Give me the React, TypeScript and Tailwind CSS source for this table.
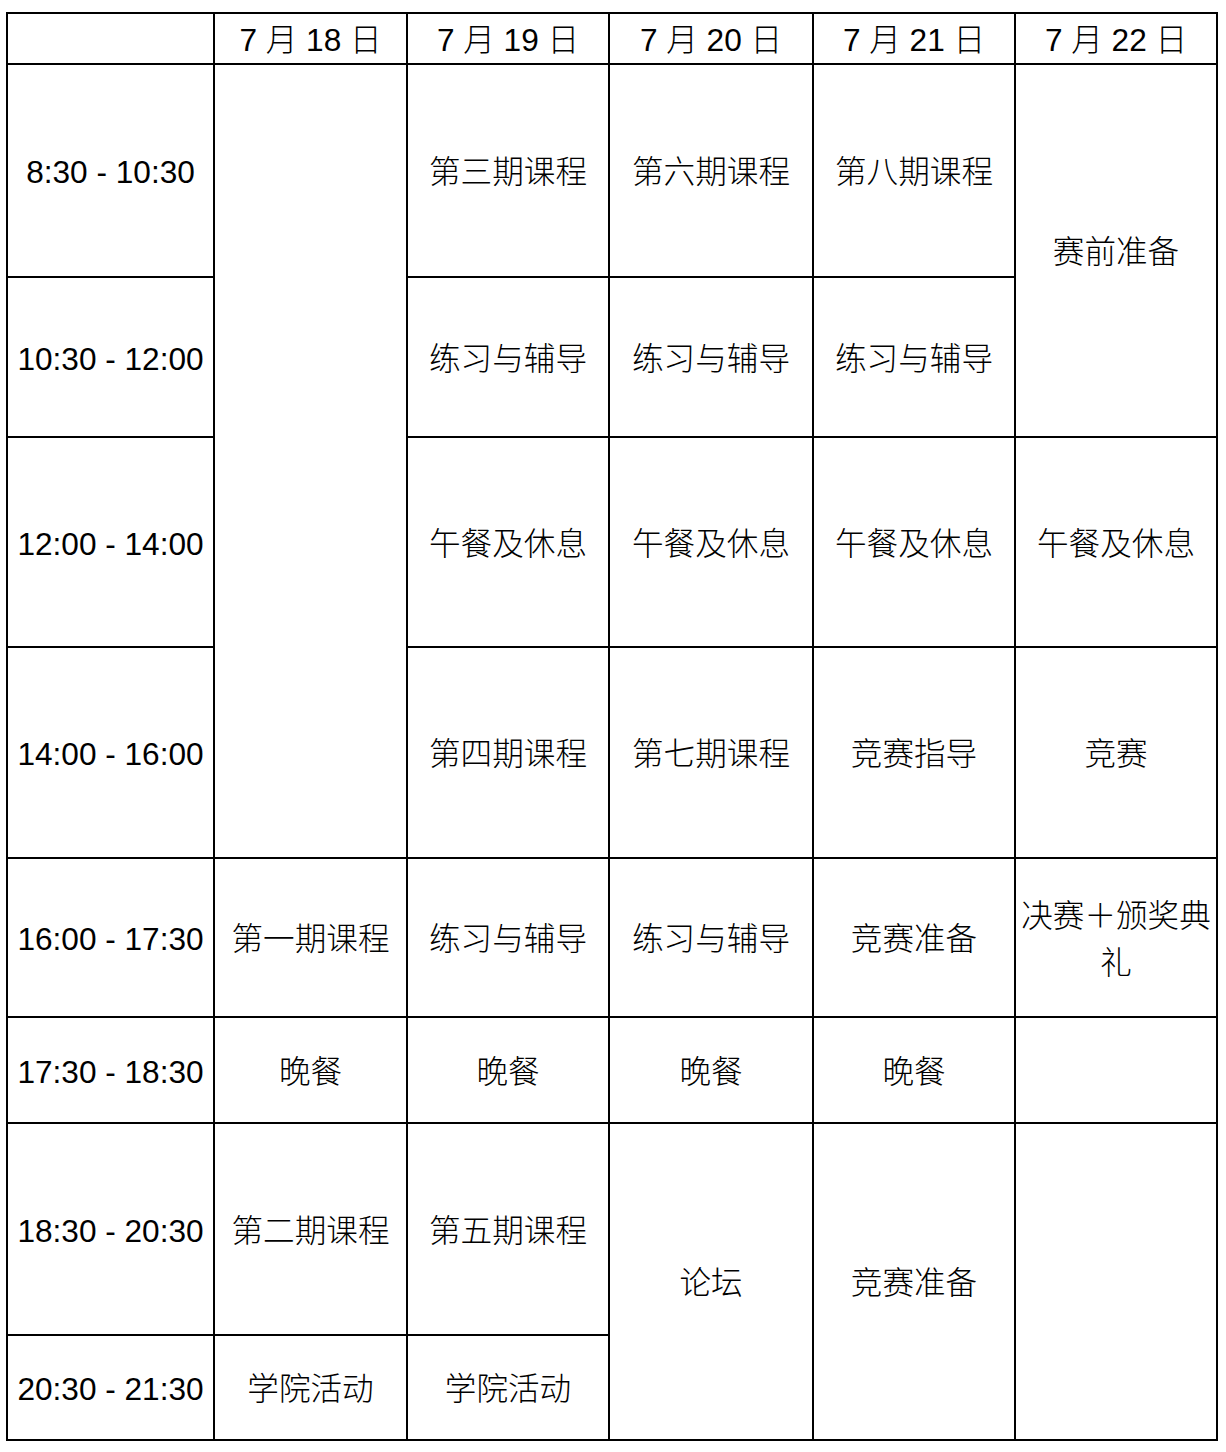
import React from 'react';

type Cell = { text?: string; col: string; row: string };

const cells: Cell[] = [
  // header
  { col: 'col-start-1', row: 'row-start-1' },
  { text: '7 月 18 日', col: 'col-start-2', row: 'row-start-1' },
  { text: '7 月 19 日', col: 'col-start-3', row: 'row-start-1' },
  { text: '7 月 20 日', col: 'col-start-4', row: 'row-start-1' },
  { text: '7 月 21 日', col: 'col-start-5', row: 'row-start-1' },
  { text: '7 月 22 日', col: 'col-start-6', row: 'row-start-1' },

  // time column
  { text: '8:30 - 10:30', col: 'col-start-1', row: 'row-start-2' },
  { text: '10:30 - 12:00', col: 'col-start-1', row: 'row-start-3' },
  { text: '12:00 - 14:00', col: 'col-start-1', row: 'row-start-4' },
  { text: '14:00 - 16:00', col: 'col-start-1', row: 'row-start-5' },
  { text: '16:00 - 17:30', col: 'col-start-1', row: 'row-start-6' },
  { text: '17:30 - 18:30', col: 'col-start-1', row: 'row-start-7' },
  { text: '18:30 - 20:30', col: 'col-start-1', row: 'row-start-8' },
  { text: '20:30 - 21:30', col: 'col-start-1', row: 'row-start-9' },

  // 7/18
  { col: 'col-start-2', row: 'row-start-2 row-span-4' },
  { text: '第一期课程', col: 'col-start-2', row: 'row-start-6' },
  { text: '晚餐', col: 'col-start-2', row: 'row-start-7' },
  { text: '第二期课程', col: 'col-start-2', row: 'row-start-8' },
  { text: '学院活动', col: 'col-start-2', row: 'row-start-9' },

  // 7/19
  { text: '第三期课程', col: 'col-start-3', row: 'row-start-2' },
  { text: '练习与辅导', col: 'col-start-3', row: 'row-start-3' },
  { text: '午餐及休息', col: 'col-start-3', row: 'row-start-4' },
  { text: '第四期课程', col: 'col-start-3', row: 'row-start-5' },
  { text: '练习与辅导', col: 'col-start-3', row: 'row-start-6' },
  { text: '晚餐', col: 'col-start-3', row: 'row-start-7' },
  { text: '第五期课程', col: 'col-start-3', row: 'row-start-8' },
  { text: '学院活动', col: 'col-start-3', row: 'row-start-9' },

  // 7/20
  { text: '第六期课程', col: 'col-start-4', row: 'row-start-2' },
  { text: '练习与辅导', col: 'col-start-4', row: 'row-start-3' },
  { text: '午餐及休息', col: 'col-start-4', row: 'row-start-4' },
  { text: '第七期课程', col: 'col-start-4', row: 'row-start-5' },
  { text: '练习与辅导', col: 'col-start-4', row: 'row-start-6' },
  { text: '晚餐', col: 'col-start-4', row: 'row-start-7' },
  { text: '论坛', col: 'col-start-4', row: 'row-start-8 row-span-2' },

  // 7/21
  { text: '第八期课程', col: 'col-start-5', row: 'row-start-2' },
  { text: '练习与辅导', col: 'col-start-5', row: 'row-start-3' },
  { text: '午餐及休息', col: 'col-start-5', row: 'row-start-4' },
  { text: '竞赛指导', col: 'col-start-5', row: 'row-start-5' },
  { text: '竞赛准备', col: 'col-start-5', row: 'row-start-6' },
  { text: '晚餐', col: 'col-start-5', row: 'row-start-7' },
  { text: '竞赛准备', col: 'col-start-5', row: 'row-start-8 row-span-2' },

  // 7/22
  { text: '赛前准备', col: 'col-start-6', row: 'row-start-2 row-span-2' },
  { text: '午餐及休息', col: 'col-start-6', row: 'row-start-4' },
  { text: '竞赛', col: 'col-start-6', row: 'row-start-5' },
  { text: '决赛＋颁奖典礼', col: 'col-start-6', row: 'row-start-6' },
  { col: 'col-start-6', row: 'row-start-7' },
  { col: 'col-start-6', row: 'row-start-8 row-span-2' },
];

export default function App() {
  return (
    <div className="min-h-[1452px] w-[1226px] bg-white pt-[12px] pl-[6px] text-black font-['Liberation_Sans','Noto_Sans_CJK_SC',sans-serif]">
      <div className="grid w-fit grid-cols-[207px_193px_202px_204px_202px_202px] grid-rows-[51px_213px_160px_210px_211px_159px_106px_212px_105px] border-l-2 border-t-2 border-black">
        {cells.map((c, i) => (
          <div
            key={i}
            className={`${c.col} ${c.row} flex items-center justify-center border-b-2 border-r-2 border-black px-1 pt-[4px] text-center text-[31.6px] leading-[47px] font-light`}
          >
            {c.text}
          </div>
        ))}
      </div>
    </div>
  );
}
